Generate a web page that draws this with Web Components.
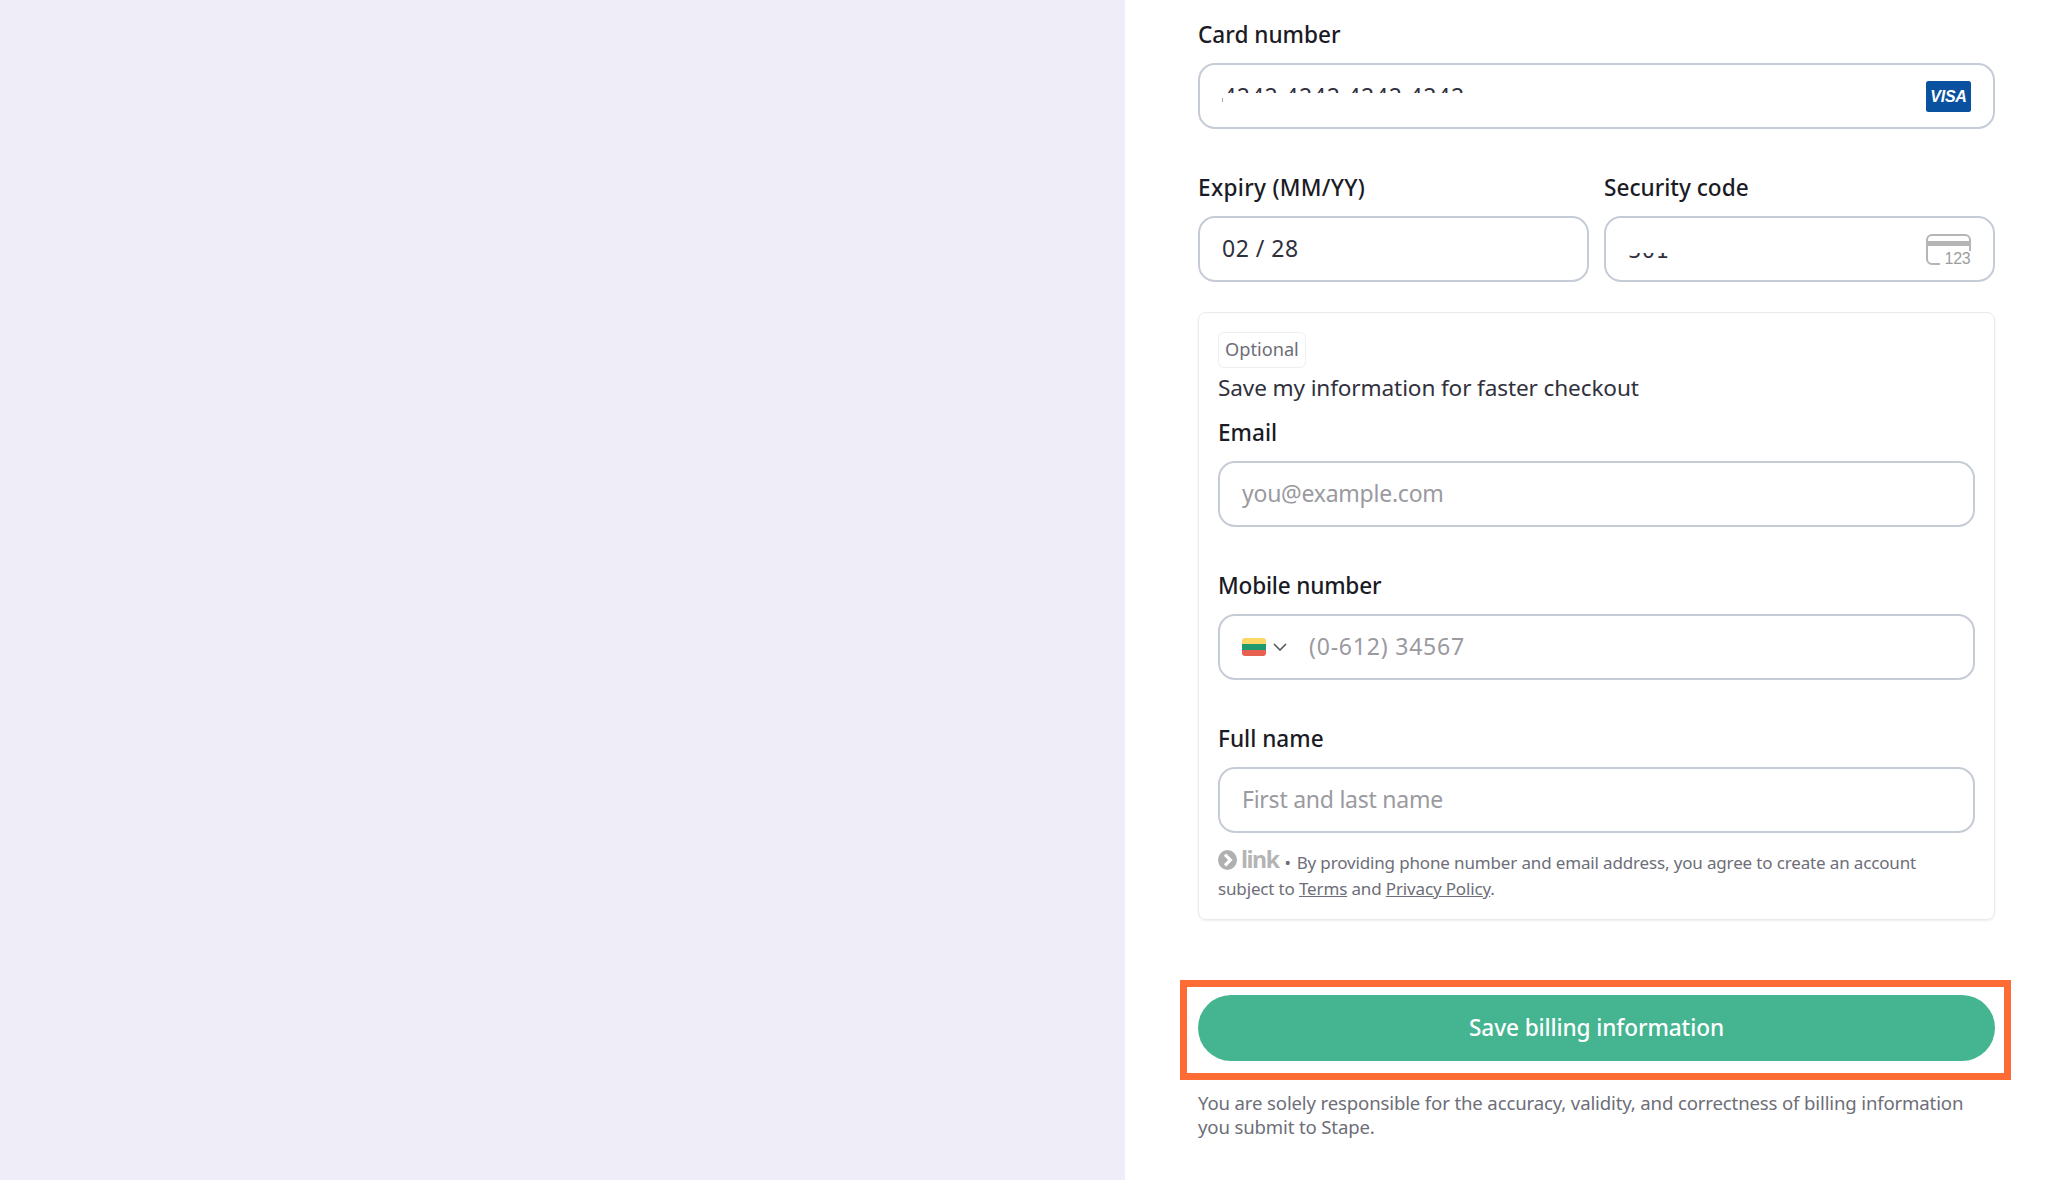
<!DOCTYPE html>
<html>
<head>
<meta charset="utf-8">
<style>
  html, body { margin: 0; height: 100%; }
  body { font-family: "Noto Sans", "Open Sans", sans-serif; color: #30313d; background: #fff; overflow: hidden; }
</style>
</head>
<body>

<template id="page-tpl">
  <style>
    :host { display: grid; grid-template-columns: 1125px 1fr; height: 1180px; }
    .side { background: #efedf8; }
    .main { padding: 19px 53px 0 73px; display: flex; flex-direction: column; }
    ::slotted(pay-save-box) { margin-top: 30px; }
    ::slotted(pay-button) { margin-top: 75px; }
    ::slotted(pay-note) { margin-top: 30px; }
  </style>
  <div class="side"></div>
  <div class="main"><slot></slot></div>
</template>

<template id="field-tpl">
  <style>
    :host { display: block; }
    label { display: block; font-size: 22.6px; line-height: 32px; font-weight: 500; color: #1a1b25; margin-bottom: 12px; letter-spacing: var(--label-ls, 0); }
    .box { box-sizing: border-box; height: 66px; border: 2px solid #c6ccd6; border-radius: 17px; background: #fff;
           display: flex; align-items: center; padding: 0 22px 0 22px; font-size: 23px; letter-spacing: -.25px; }
    .val { flex: 1; min-width: 0; white-space: nowrap; color: #30313d; padding-bottom: 2px; }
    :host([placeholder]) .val { color: #9a9a9f; }
  </style>
  <label></label>
  <div class="box"><slot name="lead"></slot><div class="val"><slot></slot></div><slot name="trail"></slot></div>
</template>

<template id="stack-tpl">
  <style>
    :host { display: flex; flex-direction: column; gap: 43px; }
  </style>
  <slot></slot>
</template>

<template id="pair-tpl">
  <style>
    :host { display: grid; grid-template-columns: 1fr 1fr; gap: 15px; }
  </style>
  <slot></slot>
</template>

<template id="save-tpl">
  <style>
    :host { display: block; box-sizing: border-box; border: 1px solid #e8eaee; border-radius: 8px; padding: 19px 19px 17px;
            box-shadow: 0 1px 2px rgba(30,40,60,.08); }
    .tag { display: inline-block; box-sizing: border-box; height: 36px; line-height: 32px; padding: 0 6px; font-size: 18.2px; color: #6d6e78;
           border: 1px solid #eeeff2; border-radius: 6px; vertical-align: top; }
    h3 { margin: 4px 0 13px; font-size: 22.6px; line-height: 32px; font-weight: 400; color: #30313d; letter-spacing: -.13px; }
    .legal { margin-top: 16px; }
  </style>
  <div class="tag">Optional</div>
  <h3>Save my information for faster checkout</h3>
  <slot></slot>
  <div class="legal"><slot name="legal"></slot></div>
</template>

<template id="legal-tpl">
  <style>
    :host { display: block; font-size: 17px; line-height: 26px; color: #6d6e78; letter-spacing: -.15px; }
    a { color: inherit; text-decoration: underline; }
    svg { vertical-align: -1px; }
    .word { font-family: "Open Sans", sans-serif; font-weight: 700; font-size: 23px; line-height: 20px; color: #b4b4b4; margin: 0 0 0 4px; letter-spacing: -1.5px; vertical-align: 1px; }
    .dot { margin: 0 6px 0 6px; }
  </style>
  <svg width="19" height="20" viewBox="0 0 19 20">
    <ellipse cx="9.5" cy="10" rx="9.5" ry="10" fill="#b0b0b0"/>
    <path d="M7 4.6 12.4 10 7 15.4" fill="none" stroke="#fff" stroke-width="3.2"/>
  </svg><span class="word">link</span><span class="dot">•</span>By providing phone number and email address, you agree to create an account<br>subject to <a>Terms</a> and <a>Privacy Policy</a>.
</template>

<template id="button-tpl">
  <style>
    :host { display: block; }
    button { display: block; width: 100%; height: 66px; border: 0; border-radius: 33px; background: #45b591; color: #fff;
             font: 500 22.6px "Noto Sans", sans-serif; letter-spacing: -.1px; padding: 0 0 2px; }
    .mark { position: absolute; left: 1180px; top: 980px; width: 831px; height: 100px; box-sizing: border-box;
            border: 7.5px solid #ff6b35; pointer-events: none; }
  </style>
  <button><slot></slot></button>
  <div class="mark"></div>
</template>

<template id="note-tpl">
  <style>
    :host { display: block; font-size: 18.6px; line-height: 23.5px; color: #6d6e78; letter-spacing: -.15px; }
  </style>
  <slot></slot>
</template>

<template id="clip-tpl">
  <style>
    :host { display: block; overflow: hidden; color: #30313d; }
    .in { white-space: nowrap; display: block; }
  </style>
  <span class="in"><slot></slot></span>
</template>

<pay-page>
  <pay-stack>
    <pay-field label="Card number">
      <span slot="lead" style="width:1px;height:4px;margin:8px -1px 0 0;background:#aaa"></span>
      <pay-clip style="height:10px;margin:1px 0 15px 1px;line-height:27px;letter-spacing:.7px">4242 4242 4242 4242</pay-clip>
      <svg slot="trail" width="45" height="31" viewBox="0 0 45 31" style="display:block">
        <rect width="45" height="31" rx="2.5" fill="#0a519f"/>
        <text x="22.5" y="21" text-anchor="middle" font-family="Liberation Sans, sans-serif" font-size="16" font-weight="700" font-style="italic" fill="#fff">VISA</text>
      </svg>
    </pay-field>
    <pay-pair>
      <pay-field label="Expiry (MM/YY)" style="--label-ls:.3px"><span style="letter-spacing:.5px">02 / 28</span></pay-field>
      <pay-field label="Security code">
        <pay-clip style="height:5px;margin-top:14px"><span style="display:block;margin-top:-13px;font:21px/22px 'DejaVu Sans',sans-serif;letter-spacing:.5px">301</span></pay-clip>
        <svg slot="trail" width="45" height="31" viewBox="0 0 45 31" style="display:block">
          <path d="M14 30H6a5 5 0 0 1-5-5V6a5 5 0 0 1 5-5h33a5 5 0 0 1 5 5v11" fill="none" stroke="#b5b5b5" stroke-width="2"/>
          <rect x="1" y="7" width="43" height="5" fill="#b5b5b5"/>
          <text x="44.5" y="30" text-anchor="end" font-family="Liberation Sans, sans-serif" font-size="16" fill="#9d9d9d">123</text>
        </svg>
      </pay-field>
    </pay-pair>
  </pay-stack>
  <pay-save-box>
    <pay-stack>
      <pay-field label="Email" placeholder>you@example.com</pay-field>
      <pay-field label="Mobile number" placeholder style="--label-ls:-.2px">
        <span slot="lead" style="display:flex;align-items:center;margin-right:22px">
          <svg width="24" height="18" viewBox="0 0 24 18" style="display:block">
            <defs><clipPath id="fl"><rect width="24" height="18" rx="3"/></clipPath></defs>
            <g clip-path="url(#fl)"><rect width="24" height="6" fill="#fcd765"/><rect y="6" width="24" height="6" fill="#1f9a6f"/><rect y="12" width="24" height="6" fill="#e8604f"/></g>
          </svg>
          <svg width="14" height="8" viewBox="0 0 14 8" style="display:block;margin-left:7px">
            <path d="M1 1l6 6 6-6" fill="none" stroke="#55565f" stroke-width="1.6"/>
          </svg>
        </span>
        <span style="letter-spacing:.8px">(0-612) 34567</span>
      </pay-field>
      <pay-field label="Full name" placeholder>First and last name</pay-field>
    </pay-stack>
    <pay-legal slot="legal"></pay-legal>
  </pay-save-box>
  <pay-button>Save billing information</pay-button>
  <pay-note>You are solely responsible for the accuracy, validity, and correctness of billing information you submit to Stape.</pay-note>
</pay-page>

<script>
// one small class per template, shadow root is always cloned from its template
function fromTemplate(id) {
  return class extends HTMLElement {
    constructor() {
      super();
      let root = this.attachShadow({ mode: 'open' });
      root.appendChild(document.getElementById(id).content.cloneNode(true));
    }
  };
}

class PayField extends fromTemplate('field-tpl') {
  connectedCallback() {
    this.shadowRoot.querySelector('label').textContent = this.getAttribute('label');
  }
}

customElements.define('pay-page', fromTemplate('page-tpl'));
customElements.define('pay-stack', fromTemplate('stack-tpl'));
customElements.define('pay-pair', fromTemplate('pair-tpl'));
customElements.define('pay-field', PayField);
customElements.define('pay-save-box', fromTemplate('save-tpl'));
customElements.define('pay-legal', fromTemplate('legal-tpl'));
customElements.define('pay-button', fromTemplate('button-tpl'));
customElements.define('pay-note', fromTemplate('note-tpl'));
customElements.define('pay-clip', fromTemplate('clip-tpl'));
</script>
</body>
</html>
